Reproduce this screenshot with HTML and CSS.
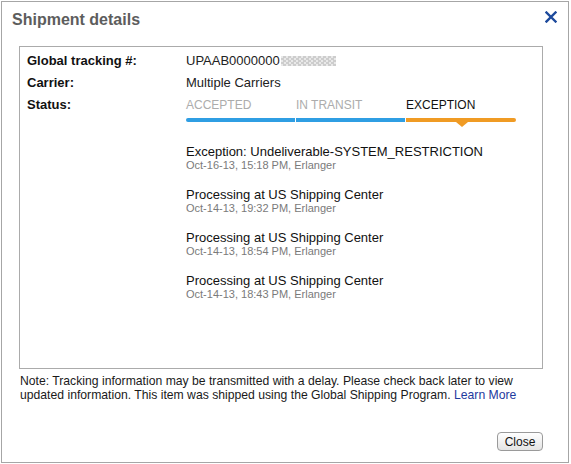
FILE: index.html
```html
<!DOCTYPE html>
<html>
<head>
<meta charset="utf-8">
<link rel="stylesheet" href="styles.css">
</head>
<body>
<div class="dialog">
  <div class="header">
    <h1 class="title">Shipment details</h1>
    <svg class="close-x" width="12" height="12" viewBox="0 0 12 12"><path d="M1.5 1.5 L10.5 10.5 M10.5 1.5 L1.5 10.5" stroke="#1d4a9c" stroke-width="2.4" stroke-linecap="square"/></svg>
  </div>
  <div class="box">
    <div class="grid">
      <div class="label">Global tracking #:</div>
      <div class="value">UPAAB0000000<span class="blur"></span></div>
      <div class="label">Carrier:</div>
      <div class="value">Multiple Carriers</div>
      <div class="label">Status:</div>
      <div class="status">
        <div class="steps">
          <div class="step done"><span class="step-name">ACCEPTED</span><span class="bar"></span></div>
          <div class="step done"><span class="step-name">IN TRANSIT</span><span class="bar"></span></div>
          <div class="step current"><span class="step-name">EXCEPTION</span><span class="bar"></span></div>
        </div>
        <div class="events">
          <div class="event">
            <div class="ev-title">Exception: Undeliverable-SYSTEM_RESTRICTION</div>
            <div class="ev-sub">Oct-16-13, 15:18 PM, Erlanger</div>
          </div>
          <div class="event">
            <div class="ev-title">Processing at US Shipping Center</div>
            <div class="ev-sub">Oct-14-13, 19:32 PM, Erlanger</div>
          </div>
          <div class="event">
            <div class="ev-title">Processing at US Shipping Center</div>
            <div class="ev-sub">Oct-14-13, 18:54 PM, Erlanger</div>
          </div>
          <div class="event">
            <div class="ev-title">Processing at US Shipping Center</div>
            <div class="ev-sub">Oct-14-13, 18:43 PM, Erlanger</div>
          </div>
        </div>
      </div>
    </div>
  </div>
  <p class="note">Note: Tracking information may be transmitted with a delay. Please check back later to view updated information. This item was shipped using the Global Shipping Program. <a href="#" class="link">Learn More</a></p>
  <div class="footer"><button class="btn">Close</button></div>
</div>
</body>
</html>
```
FILE: styles.css
```css
html, body {
  margin: 0;
  padding: 0;
  background: #ffffff;
}
body {
  padding: 1px 0 0 1px;
  font-family: "Liberation Sans", Arial, Helvetica, sans-serif;
}
.dialog {
  box-sizing: border-box;
  width: 568px;
  height: 462px;
  border: 1px solid #a6a6a6;
  background: #fff;
  display: flex;
  flex-direction: column;
}
.header {
  height: 44px;
  display: flex;
  justify-content: space-between;
  align-items: flex-start;
  padding: 0 0 0 10px;
  box-sizing: border-box;
}
.title {
  margin: 8px 0 0;
  font-size: 16px;
  line-height: 20px;
  font-weight: bold;
  color: #5d5d5d;
}
.close-x {
  margin: 9px 11px 0 0;
}
.box {
  margin-left: 17px;
  width: 524px;
  height: 323px;
  box-sizing: border-box;
  border: 1px solid #ababab;
  padding: 3px 0 0 7px;
}
.grid {
  display: grid;
  grid-template-columns: 159px 1fr;
  font-size: 13px;
  line-height: 22px;
}
.label {
  font-weight: bold;
  color: #111;
}
.value {
  color: #222;
  display: flex;
  align-items: center;
}
.blur {
  display: inline-block;
  width: 55px;
  height: 10px;
  margin-left: 1px;
  background: repeating-conic-gradient(#cdcdcd 0 25%, #e9e9e9 0 50%) 0 0 / 5px 4px;
  filter: blur(0.7px);
}
.status {
  grid-column: 2;
  grid-row: 3;
}
.steps {
  display: flex;
  width: 330px;
  font-size: 12px;
}
.step {
  width: 110px;
  display: flex;
  flex-direction: column;
}
.step-name {
  color: #acacac;
  line-height: 22px;
}
.step.current .step-name {
  color: #111;
}
.bar {
  display: block;
  height: 4px;
  margin-top: 2px;
  background: #2f9ee3;
  position: relative;
}
.step:first-child .bar {
  border-radius: 2px 0 0 2px;
  margin-right: 1px;
}
.step:nth-child(2) .bar {
  margin-right: 1px;
}
.step.current .bar {
  background: #f09b24;
  border-radius: 0 2px 2px 0;
}
.step.current .bar::after {
  content: "";
  position: absolute;
  left: 50px;
  top: 4px;
  border-left: 6px solid transparent;
  border-right: 6px solid transparent;
  border-top: 5px solid #f09b24;
}
.events {
  margin-top: 23px;
}
.event {
  margin-bottom: 16px;
}
.ev-title {
  font-size: 13px;
  line-height: 14px;
  color: #111;
}
.ev-sub {
  font-size: 11px;
  line-height: 13px;
  color: #7a7a7a;
}
.note {
  margin: 5px 0 0 18px;
  width: 524px;
  font-size: 12.2px;
  line-height: 14px;
  color: #1a1a1a;
}
.link {
  color: #1e3a9e;
  text-decoration: none;
}
.footer {
  display: flex;
  justify-content: flex-end;
  padding: 0 25px 0 0;
  margin-top: 30px;
}
.btn {
  font-family: "Liberation Sans", Arial, sans-serif;
  font-size: 12px;
  color: #111;
  height: 19px;
  width: 46px;
  padding: 0;
  border: 1px solid #9a9a9a;
  border-radius: 4px;
  background: linear-gradient(#ffffff, #e4e4e4);
}
```
